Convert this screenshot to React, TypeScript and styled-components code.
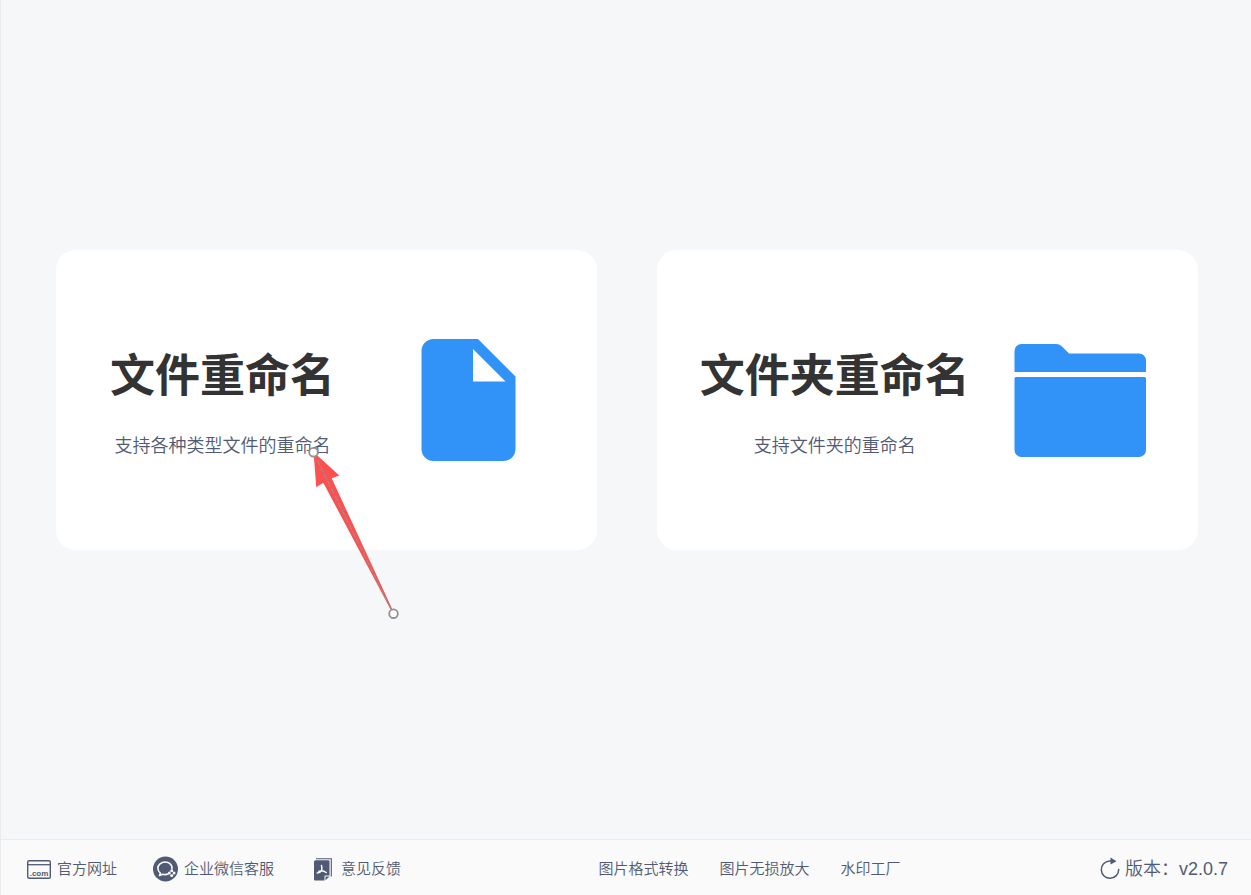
import React from "react";
import styled, { createGlobalStyle } from "styled-components";

const INK = "#515a74";
const BLUE = "#3192f7";

const GlobalStyle = createGlobalStyle`
  *, *::before, *::after { box-sizing: border-box; }
  body {
    margin: 0;
    background: #f5f7f9;
    color: ${INK};
    font-family: "Liberation Sans", "Noto Sans CJK SC", sans-serif;
    font-weight: 350;
  }
`;

const Page = styled.div`
  display: flex;
  flex-direction: column;
  min-height: 100vh;
  border-left: 1px solid #e9ebee;
`;

const Main = styled.main`
  flex: 1;
  display: grid;
  grid-template-columns: 1fr 1fr;
  gap: 60px;
  align-items: center;
  padding: 0 53px 39px 55px;
`;

const Card = styled.button`
  display: flex;
  align-items: center;
  justify-content: space-around;
  min-height: 300px;
  padding: 0 25px;
  border: 0;
  border-radius: 20px;
  background: #fff;
  color: inherit;
  font: inherit;
  cursor: pointer;
`;

const Copy = styled.span`
  position: relative;
  display: flex;
  flex-direction: column;
  align-items: center;
  gap: 24px;
  padding-top: 2px;
  white-space: nowrap;
`;

const Title = styled.span`
  color: #333;
  font-size: 45px;
  font-weight: 700;
  line-height: 66px;
`;

const Description = styled.span`
  font-size: 18px;
  line-height: 24px;
`;

const CardIcon = styled.svg`
  flex: none;
  width: 150px;
  height: 150px;
  fill: ${BLUE};
`;

const Arrow = styled.svg`
  position: absolute;
  top: 100px;
  left: 195px;
  width: 100px;
  height: 180px;
  pointer-events: none;
  z-index: 1;
`;

const Footer = styled.footer`
  display: flex;
  align-items: center;
  justify-content: space-between;
  min-height: 56px;
  padding: 3px 23px 0 25px;
  border-top: 1px solid #e9ebee;
  background: #fafafa;
  white-space: nowrap;
`;

const LinkGroup = styled.nav<{ $gap: number }>`
  display: flex;
  align-items: center;
  gap: ${(p) => p.$gap}px;
`;

const FooterLink = styled.a`
  display: flex;
  align-items: center;
  gap: 6px;
  color: inherit;
  font-size: 15px;
  line-height: 26px;
  text-decoration: none;
`;

const FooterIcon = styled.svg`
  flex: none;
  width: 25px;
  height: 26px;
`;

const VersionButton = styled.button`
  display: flex;
  align-items: center;
  gap: 5px;
  padding: 0;
  border: 0;
  background: none;
  color: inherit;
  font: inherit;
  font-size: 18px;
  line-height: 26px;
  cursor: pointer;
`;

const RefreshIcon = styled.svg`
  flex: none;
  width: 22px;
  height: 24px;
`;

function FileIcon() {
  return (
    <CardIcon viewBox="0 0 150 150" aria-hidden="true">
      <path
        fillRule="evenodd"
        d="M40.500 14H85L122.500 51.500V124a12 12 0 0 1-12 12H40.500a12 12 0 0 1-12-12V26a12 12 0 0 1 12-12ZM80 24V56.500H112.500Z"
      />
    </CardIcon>
  );
}

function FolderIcon() {
  return (
    <CardIcon viewBox="0 0 150 150" aria-hidden="true">
      <path d="M9.500 47V26a7 7 0 0 1 7-7H51c3 0 4.500 1 6.500 3l6.500 6.500H134a7 7 0 0 1 7 7V47Z" />
      <path d="M9.500 53.500a1.500 1.500 0 0 1 1.500-1.500H139.500a1.500 1.500 0 0 1 1.500 1.500V125a7 7 0 0 1-7 7H16.500a7 7 0 0 1-7-7Z" />
    </CardIcon>
  );
}

function PointerArrow() {
  return (
    <Arrow viewBox="0 0 100 180" aria-hidden="true">
      <path d="M8.500 10L34.300 33.500L26.700 36.300L89.500 172L88 172L18.300 40.700L11.300 45.200Z" fill="#fc5151" />
      <path d="M8.500 10.500L88.500 172" stroke="#9b8f8f" strokeWidth="1.100" strokeDasharray="6 2" />
      <circle cx="8.500" cy="10.200" r="4.300" fill="#fff" stroke="#919191" strokeWidth="1.800" />
      <circle cx="88.500" cy="171.700" r="4.300" fill="#fff" stroke="#919191" strokeWidth="1.800" />
    </Arrow>
  );
}

function WebsiteIcon() {
  return (
    <FooterIcon viewBox="0 0 25 26" aria-hidden="true">
      <rect x="1.700" y="4.700" width="22.600" height="17.600" rx="1.500" fill="none" stroke={INK} strokeWidth="1.400" />
      <path d="M1.500 8.700H24.500" stroke={INK} strokeWidth="1.300" />
      <text
        x="13"
        y="19.500"
        textAnchor="middle"
        fill={INK}
        fontSize="8"
        fontWeight="700"
        fontFamily="'Liberation Sans', sans-serif"
      >
        .com
      </text>
    </FooterIcon>
  );
}

function ServiceIcon() {
  return (
    <FooterIcon viewBox="0 0 25 26" aria-hidden="true">
      <circle cx="12.500" cy="13" r="12.500" fill={INK} />
      <path
        d="M19 12.800C19.400 8.700 16.200 6 12.200 6C8 6 4.900 8.700 4.900 12.200C4.900 14.300 5.900 16 7.400 17.100L6.500 19.500L9.800 18.300C11.500 18.800 13.300 18.700 15 18.100"
        fill="none"
        stroke="#fafafa"
        strokeWidth="1.600"
        strokeLinecap="round"
        strokeLinejoin="round"
      />
      <g fill="#fafafa">
        <circle cx="18.700" cy="14.800" r="1.500" />
        <circle cx="21" cy="17.100" r="1.500" />
        <circle cx="18.700" cy="19.400" r="1.500" />
        <circle cx="16.400" cy="17.100" r="1.500" />
      </g>
      <path d="M18.700 15.800L20 17.100L18.700 18.400L17.400 17.100Z" fill={INK} />
    </FooterIcon>
  );
}

function FeedbackIcon() {
  return (
    <FooterIcon viewBox="0 0 25 26" aria-hidden="true">
      <path d="M6 2.700H21.300V20.500" fill="none" stroke={INK} strokeWidth="1.100" />
      <path d="M5.500 4.300H18.500a1 1 0 0 1 1 1V19.500H15.300a.8.800 0 0 0-.8.800V24.500H5a1 1 0 0 1-1-1V5.800a1.500 1.500 0 0 1 1.500-1.500Z" fill={INK} />
      <path d="M15.500 20.500H19.500L15.500 24.300Z" fill={INK} />
      <path
        d="M11.500 9.500C11.900 11 12 12.600 11.700 14.500M11.700 14.500C10.600 16 9 17 7.200 17M8.800 15.400C11 14.200 13.500 14.500 16.200 16.500"
        fill="none"
        stroke="#fafafa"
        strokeWidth="1.500"
        strokeLinecap="round"
      />
    </FooterIcon>
  );
}

export default function App() {
  return (
    <>
      <GlobalStyle />
      <Page>
        <Main>
          <Card type="button">
            <Copy>
              <Title>文件重命名</Title>
              <Description>支持各种类型文件的重命名</Description>
              <PointerArrow />
            </Copy>
            <FileIcon />
          </Card>
          <Card type="button">
            <Copy>
              <Title>文件夹重命名</Title>
              <Description>支持文件夹的重命名</Description>
            </Copy>
            <FolderIcon />
          </Card>
        </Main>
        <Footer>
          <LinkGroup $gap={36}>
            <FooterLink href="#website">
              <WebsiteIcon />
              官方网址
            </FooterLink>
            <FooterLink href="#service">
              <ServiceIcon />
              企业微信客服
            </FooterLink>
            <FooterLink href="#feedback">
              <FeedbackIcon />
              意见反馈
            </FooterLink>
          </LinkGroup>
          <LinkGroup $gap={31}>
            <FooterLink href="#convert">图片格式转换</FooterLink>
            <FooterLink href="#enlarge">图片无损放大</FooterLink>
            <FooterLink href="#watermark">水印工厂</FooterLink>
          </LinkGroup>
          <VersionButton type="button">
            <RefreshIcon viewBox="0 0 22 24" aria-hidden="true">
              <path d="M14 3.900H11.500A8.700 8.700 0 1 0 20.700 12.500" fill="none" stroke={INK} strokeWidth="1.500" strokeLinecap="round" />
              <path d="M12.500 0.500L18.500 4.300L12.500 7.500Z" fill={INK} />
            </RefreshIcon>
            版本：v2.0.7
          </VersionButton>
        </Footer>
      </Page>
    </>
  );
}
